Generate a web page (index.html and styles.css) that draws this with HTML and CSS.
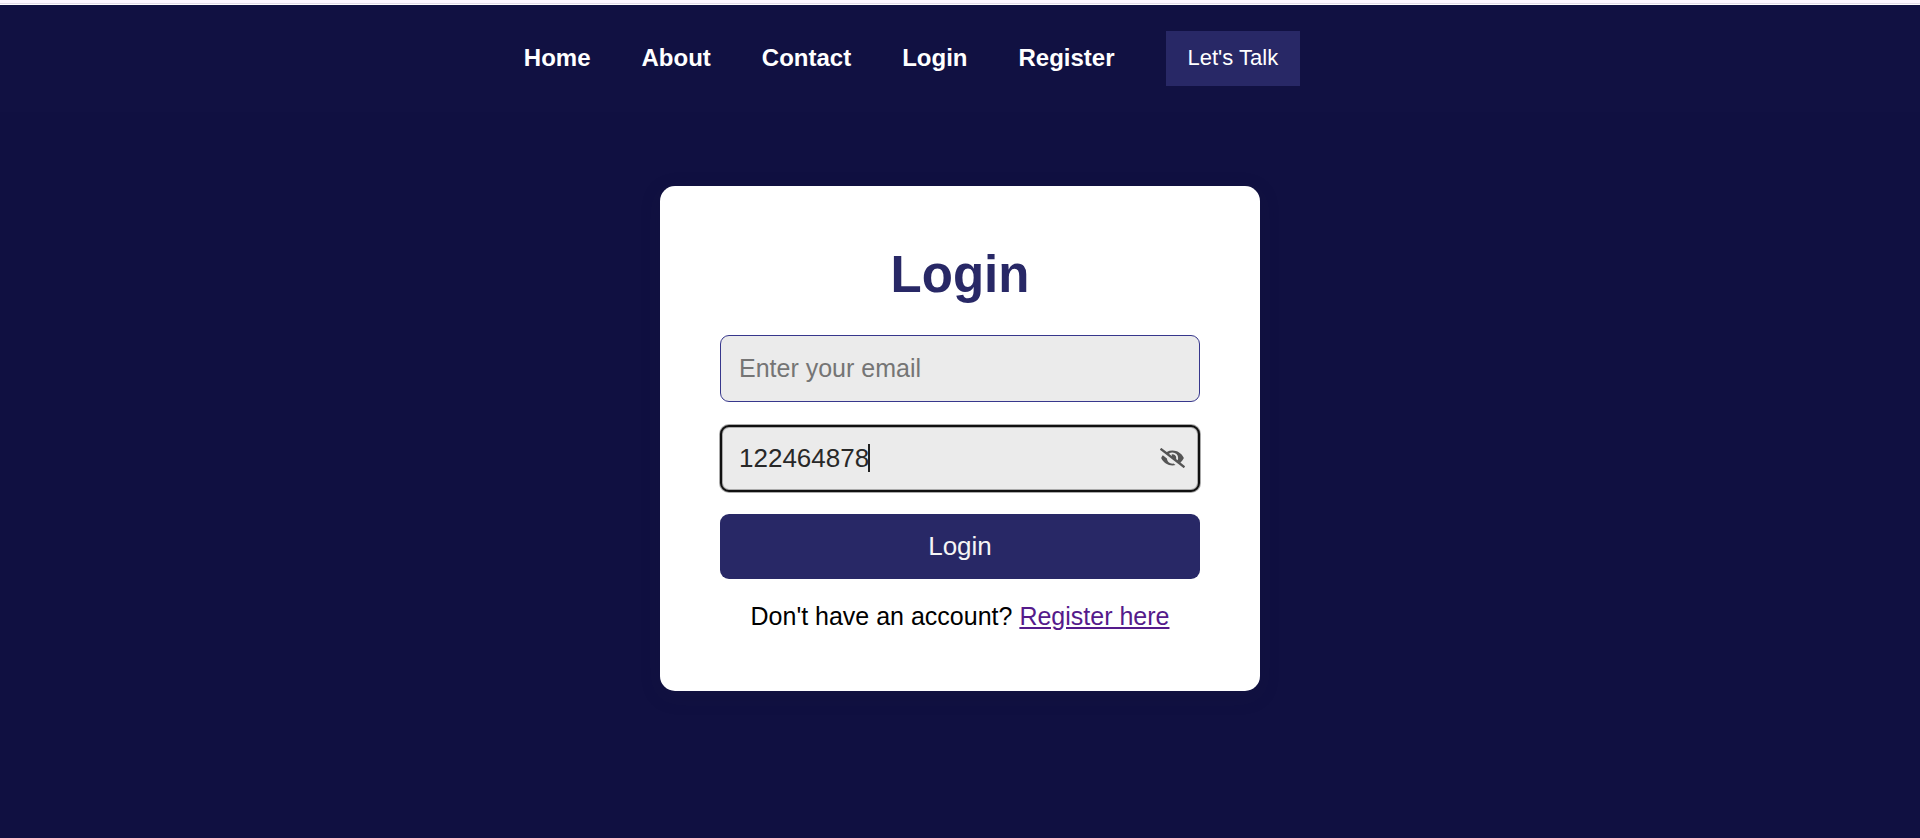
FILE: index.html
```html
<!DOCTYPE html>
<html lang="en">
<head>
<meta charset="utf-8">
<title>Login</title>
<link rel="stylesheet" href="styles.css">
</head>
<body>
<header class="site-header">
  <nav class="nav">
    <a href="#">Home</a>
    <a href="#">About</a>
    <a href="#">Contact</a>
    <a href="#">Login</a>
    <a href="#">Register</a>
    <button class="talk" type="button">Let's Talk</button>
  </nav>
</header>
<main class="page">
  <form class="card">
    <h1 class="title">Login</h1>
    <input class="field" type="email" placeholder="Enter your email" aria-label="Email">
    <div class="password">
      <input class="field field-active" type="text" value="122464878" aria-label="Password">
      <span class="caret"></span>
      <button class="toggle" type="button" aria-label="Hide password">
        <svg viewBox="0 0 640 512" width="25" height="20" fill="#555"><path d="M320 400c-75.85 0-137.25-58.71-142.9-133.11L72.2 185.82c-13.79 17.3-26.48 35.59-36.72 55.59a32.35 32.35 0 0 0 0 29.19C89.71 376.41 197.07 448 320 448c26.91 0 52.87-4 77.89-10.46L346 397.39a144.13 144.13 0 0 1-26 2.61zm313.82 58.1l-110.55-85.44a331.25 331.25 0 0 0 81.25-102.07 32.35 32.35 0 0 0 0-29.19C550.29 135.59 442.93 64 320 64a308.15 308.15 0 0 0-147.32 37.7L45.46 3.37A16 16 0 0 0 23 6.18L3.37 31.45A16 16 0 0 0 6.18 53.9l588.36 454.73a16 16 0 0 0 22.46-2.81l19.64-25.27a16 16 0 0 0-2.82-22.45zM450.23 313.49l-39.3-30.38A94.75 94.75 0 0 0 416 256a94.76 94.76 0 0 0-121.31-92.21A47.65 47.65 0 0 1 304 192a46.64 46.64 0 0 1-1.54 10l-73.61-56.89A142.31 142.31 0 0 1 320 112a143.92 143.92 0 0 1 144 144c0 21.63-5.29 41.79-13.77 57.49z"/></svg>
      </button>
    </div>
    <button class="submit" type="submit">Login</button>
    <p class="hint">Don't have an account? <a href="#">Register here</a></p>
  </form>
</main>
</body>
</html>
```
FILE: styles.css
```css
* { box-sizing: border-box; }

body {
  margin: 0;
  min-height: 100vh;
  background: #101041;
  font-family: "Liberation Sans", Arial, sans-serif;
  font-size: 26px;
}

button, input { font: inherit; }

.site-header {
  border-top: 3px solid #fdf7ff;
  background: #111142;
  box-shadow: inset 0 1px #e4dce9, inset 0 2px #fff;
  padding: 28px 96px 26px 0;
}

.nav {
  display: flex;
  justify-content: center;
  align-items: center;
  gap: 51px;
}

.nav a {
  padding-bottom: 2px;
  color: #fff;
  font-size: 24px;
  font-weight: bold;
  text-decoration: none;
}

.talk {
  border: 0;
  padding: 14px 22px 16px;
  background: #282866;
  color: #fff;
  font-size: 22px;
  line-height: 25px;
}

.page {
  display: flex;
  justify-content: center;
  padding: 74px 20px;
}

.card {
  display: flex;
  flex-direction: column;
  width: 100%;
  max-width: 600px;
  padding: 60px;
  border-radius: 15px;
  background: #fff;
  box-shadow: 0 5px 20px rgba(30, 30, 60, 0.2);
}

.title {
  margin: 0 0 31px;
  color: #282866;
  font-size: 51px;
  line-height: 58px;
  text-align: center;
}

.field {
  display: block;
  width: 100%;
  padding: 17px 18px;
  border: 1px solid #37378c;
  border-radius: 9px;
  background: #ebebeb;
  color: #282828;
  line-height: 30px;
  height: 67px;
}

.field::placeholder {
  color: #757575;
  font-size: 25px;
  opacity: 1;
}

.password {
  position: relative;
  margin: 23px 0 22px;
}

.field-active {
  border-color: #999;
  outline: 2px solid #101010;
  outline-offset: -2px;
  box-shadow: 0 0 0 1px #aaa, inset 0 0 0 2px #aaa;
}

.caret {
  position: absolute;
  top: 19px;
  left: 148px;
  width: 2px;
  height: 28px;
  background: #222;
}

.toggle {
  position: absolute;
  top: 23px;
  right: 15px;
  display: flex;
  padding: 0;
  border: 0;
  background: none;
}

.submit {
  padding: 17px;
  border: 0;
  border-radius: 9px;
  background: #282866;
  color: #f5f5f5;
  line-height: 31px;
}

.hint {
  margin: 22px 0 0;
  font-size: 25px;
  line-height: 30px;
  text-align: center;
}

.hint a { color: #551a8b; }
```
